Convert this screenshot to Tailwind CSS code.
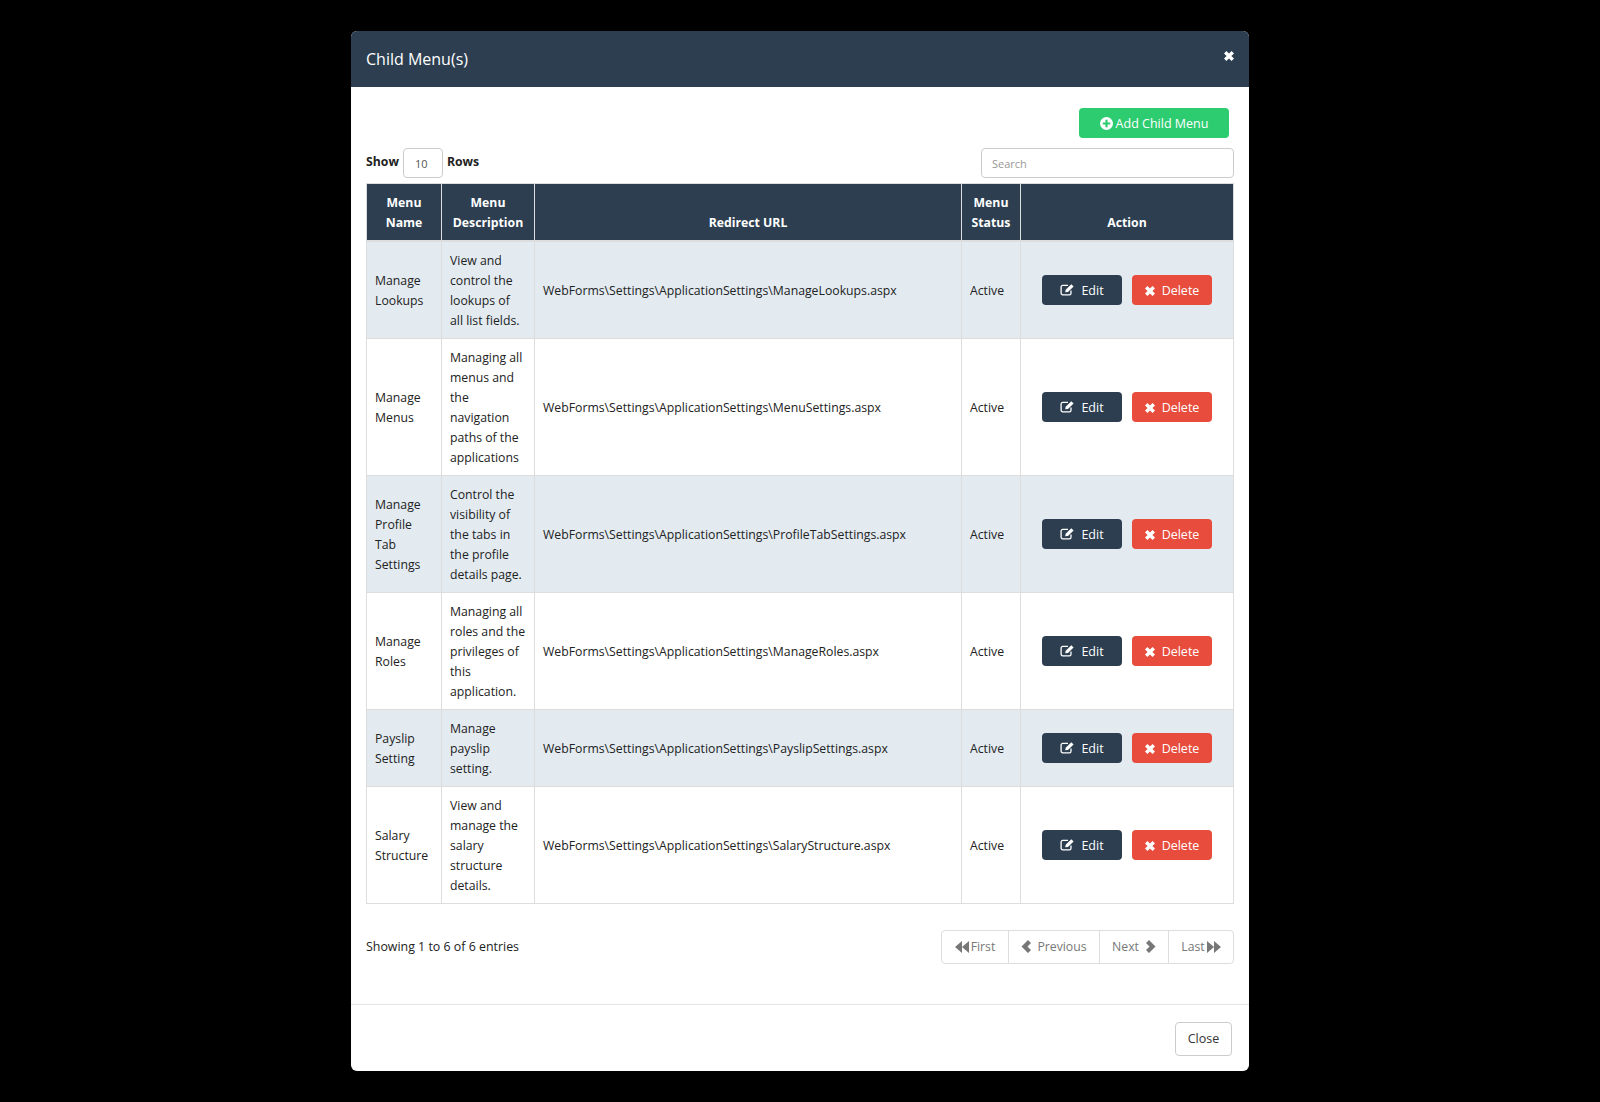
<!DOCTYPE html>
<html lang="en">
<head>
    <meta charset="UTF-8">
    <title>Child Menu(s)</title>
    <script src="https://cdn.jsdelivr.net/npm/@tailwindcss/browser@4"></script>
</head>
<body class="bg-black min-h-screen font-['Open_Sans',sans-serif] text-[12.25px] leading-5 text-[#222]">
    <!-- Modal -->
    <div class="w-[898px] h-[1040px] mt-[31px] ml-[351px] bg-white rounded-md overflow-hidden flex flex-col">
        <div class="h-14 shrink-0 bg-[#2c3e50] flex items-center justify-between pl-[15px] pr-[15px] text-white">
            <h4 class="text-[16px]">Child Menu(s)</h4>
            <svg class="w-[10px] h-[10px] mb-[6px]" viewBox="0 0 10 10" fill="#fff"><path d="M2.400 0 5 2.600 7.600 0 10 2.400 7.400 5 10 7.600 7.600 10 5 7.400 2.400 10 0 7.600 2.600 5 0 2.400z"/></svg>
        </div>

        <div class="flex-1 px-[15px] pt-[21px]">
            <div class="flex justify-end pr-[5px]">
                <button class="w-[150px] h-[30px] pt-px bg-[#2ecc71] text-white text-[12.5px] rounded flex items-center justify-center gap-[3px]">
                    <svg class="w-[13px] h-[13px]" viewBox="0 0 24 24"><circle cx="12" cy="12" r="12" fill="#fff"/><path d="M10 5h4v5h5v4h-5v5h-4v-5H5v-4h5z" fill="#2ecc71"/></svg>
                    Add Child Menu
                </button>
            </div>

            <div class="flex justify-between items-center mt-[10px] mb-[5px]">
                <div class="flex items-center font-bold text-[#222]">
                    <span class="mb-[3px]">Show</span>
                    <input value="10" class="w-[40px] h-[30px] mx-[4px] pl-[11px] border border-[#ccc] rounded text-[11px] font-normal text-[#555]">
                    <span class="mb-[3px]">Rows</span>
                </div>
                <input placeholder="Search" class="w-[253px] h-[30px] border border-[#ccc] rounded px-[10px] text-[11px] placeholder:text-[#999]">
            </div>

            <!-- Table -->
            <table class="w-[868px] table-fixed border-collapse">
                <colgroup>
                    <col class="w-[75px]">
                    <col class="w-[93px]">
                    <col class="w-[427px]">
                    <col class="w-[59px]">
                    <col>
                </colgroup>
                <thead class="bg-[#2c3e50] text-white font-bold">
                    <tr class="h-[57px]">
                        <th class="border border-[#ddd] border-b-2 align-bottom px-2 pb-[7px]">Menu<br>Name</th>
                        <th class="border border-[#ddd] border-b-2 align-bottom px-1 pb-[7px]">Menu<br>Description</th>
                        <th class="border border-[#ddd] border-b-2 align-bottom px-2 pb-[7px]">Redirect URL</th>
                        <th class="border border-[#ddd] border-b-2 align-bottom px-1 pb-[7px]">Menu<br>Status</th>
                        <th class="border border-[#ddd] border-b-2 align-bottom px-2 pb-[7px]">Action</th>
                    </tr>
                </thead>
                <tbody>
                    <tr class="bg-[#e3ebf1]">
                        <td class="border border-[#ddd] px-2 pt-[9px] pb-[7px]">Manage<br>Lookups</td>
                        <td class="border border-[#ddd] px-2 pt-[9px] pb-[7px] whitespace-nowrap">View and<br>control the<br>lookups of<br>all list fields.</td>
                        <td class="border border-[#ddd] px-2 pt-[9px] pb-[7px]">WebForms\Settings\ApplicationSettings\ManageLookups.aspx</td>
                        <td class="border border-[#ddd] px-2 pt-[9px] pb-[7px]">Active</td>
                        <td class="border border-[#ddd] p-2">
                            <div class="flex justify-center gap-[10px] text-[12.5px]">
                                <button class="w-20 h-[30px] pt-[3px] bg-[#2c3e50] text-white rounded flex items-center justify-center gap-[6px]"><svg class="w-[15px] h-[13px] mb-[3px]" viewBox="0 0 15 13" fill="none" stroke="#fff" stroke-width="1.3"><path d="M11 7.500v2.700a1.600 1.600 0 0 1-1.600 1.600H2.700a1.600 1.600 0 0 1-1.600-1.600V4a1.600 1.600 0 0 1 1.600-1.600H8"/><path d="M5.200 9.300 5.700 6.800 11.300 1.200 13.600 3.500 8 9z" fill="#fff" stroke="none"/></svg>Edit</button>
                                <button class="w-20 h-[30px] pt-[3px] bg-[#e74c3c] text-white rounded flex items-center justify-center gap-[7px]"><svg class="w-[10px] h-[10px] mb-px" viewBox="0 0 10 10" fill="#fff"><path d="M2.400 0 5 2.600 7.600 0 10 2.400 7.400 5 10 7.600 7.600 10 5 7.400 2.400 10 0 7.600 2.600 5 0 2.400z"/></svg>Delete</button>
                            </div>
                        </td>
                    </tr>
                    <tr class="bg-white">
                        <td class="border border-[#ddd] px-2 pt-[9px] pb-[7px]">Manage<br>Menus</td>
                        <td class="border border-[#ddd] px-2 pt-[9px] pb-[7px] whitespace-nowrap">Managing all<br>menus and<br>the<br>navigation<br>paths of the<br>applications</td>
                        <td class="border border-[#ddd] px-2 pt-[9px] pb-[7px]">WebForms\Settings\ApplicationSettings\MenuSettings.aspx</td>
                        <td class="border border-[#ddd] px-2 pt-[9px] pb-[7px]">Active</td>
                        <td class="border border-[#ddd] p-2">
                            <div class="flex justify-center gap-[10px] text-[12.5px]">
                                <button class="w-20 h-[30px] pt-[3px] bg-[#2c3e50] text-white rounded flex items-center justify-center gap-[6px]"><svg class="w-[15px] h-[13px] mb-[3px]" viewBox="0 0 15 13" fill="none" stroke="#fff" stroke-width="1.3"><path d="M11 7.500v2.700a1.600 1.600 0 0 1-1.600 1.600H2.700a1.600 1.600 0 0 1-1.600-1.600V4a1.600 1.600 0 0 1 1.600-1.600H8"/><path d="M5.200 9.300 5.700 6.800 11.300 1.200 13.600 3.500 8 9z" fill="#fff" stroke="none"/></svg>Edit</button>
                                <button class="w-20 h-[30px] pt-[3px] bg-[#e74c3c] text-white rounded flex items-center justify-center gap-[7px]"><svg class="w-[10px] h-[10px] mb-px" viewBox="0 0 10 10" fill="#fff"><path d="M2.400 0 5 2.600 7.600 0 10 2.400 7.400 5 10 7.600 7.600 10 5 7.400 2.400 10 0 7.600 2.600 5 0 2.400z"/></svg>Delete</button>
                            </div>
                        </td>
                    </tr>
                    <tr class="bg-[#e3ebf1]">
                        <td class="border border-[#ddd] px-2 pt-[9px] pb-[7px]">Manage<br>Profile<br>Tab<br>Settings</td>
                        <td class="border border-[#ddd] px-2 pt-[9px] pb-[7px] whitespace-nowrap">Control the<br>visibility of<br>the tabs in<br>the profile<br>details page.</td>
                        <td class="border border-[#ddd] px-2 pt-[9px] pb-[7px]">WebForms\Settings\ApplicationSettings\ProfileTabSettings.aspx</td>
                        <td class="border border-[#ddd] px-2 pt-[9px] pb-[7px]">Active</td>
                        <td class="border border-[#ddd] p-2">
                            <div class="flex justify-center gap-[10px] text-[12.5px]">
                                <button class="w-20 h-[30px] pt-[3px] bg-[#2c3e50] text-white rounded flex items-center justify-center gap-[6px]"><svg class="w-[15px] h-[13px] mb-[3px]" viewBox="0 0 15 13" fill="none" stroke="#fff" stroke-width="1.3"><path d="M11 7.500v2.700a1.600 1.600 0 0 1-1.600 1.600H2.700a1.600 1.600 0 0 1-1.600-1.600V4a1.600 1.600 0 0 1 1.600-1.600H8"/><path d="M5.200 9.300 5.700 6.800 11.300 1.200 13.600 3.500 8 9z" fill="#fff" stroke="none"/></svg>Edit</button>
                                <button class="w-20 h-[30px] pt-[3px] bg-[#e74c3c] text-white rounded flex items-center justify-center gap-[7px]"><svg class="w-[10px] h-[10px] mb-px" viewBox="0 0 10 10" fill="#fff"><path d="M2.400 0 5 2.600 7.600 0 10 2.400 7.400 5 10 7.600 7.600 10 5 7.400 2.400 10 0 7.600 2.600 5 0 2.400z"/></svg>Delete</button>
                            </div>
                        </td>
                    </tr>
                    <tr class="bg-white">
                        <td class="border border-[#ddd] px-2 pt-[9px] pb-[7px]">Manage<br>Roles</td>
                        <td class="border border-[#ddd] px-2 pt-[9px] pb-[7px] whitespace-nowrap">Managing all<br>roles and the<br>privileges of<br>this<br>application.</td>
                        <td class="border border-[#ddd] px-2 pt-[9px] pb-[7px]">WebForms\Settings\ApplicationSettings\ManageRoles.aspx</td>
                        <td class="border border-[#ddd] px-2 pt-[9px] pb-[7px]">Active</td>
                        <td class="border border-[#ddd] p-2">
                            <div class="flex justify-center gap-[10px] text-[12.5px]">
                                <button class="w-20 h-[30px] pt-[3px] bg-[#2c3e50] text-white rounded flex items-center justify-center gap-[6px]"><svg class="w-[15px] h-[13px] mb-[3px]" viewBox="0 0 15 13" fill="none" stroke="#fff" stroke-width="1.3"><path d="M11 7.500v2.700a1.600 1.600 0 0 1-1.600 1.600H2.700a1.600 1.600 0 0 1-1.600-1.600V4a1.600 1.600 0 0 1 1.600-1.600H8"/><path d="M5.200 9.300 5.700 6.800 11.300 1.200 13.600 3.500 8 9z" fill="#fff" stroke="none"/></svg>Edit</button>
                                <button class="w-20 h-[30px] pt-[3px] bg-[#e74c3c] text-white rounded flex items-center justify-center gap-[7px]"><svg class="w-[10px] h-[10px] mb-px" viewBox="0 0 10 10" fill="#fff"><path d="M2.400 0 5 2.600 7.600 0 10 2.400 7.400 5 10 7.600 7.600 10 5 7.400 2.400 10 0 7.600 2.600 5 0 2.400z"/></svg>Delete</button>
                            </div>
                        </td>
                    </tr>
                    <tr class="bg-[#e3ebf1]">
                        <td class="border border-[#ddd] px-2 pt-[9px] pb-[7px]">Payslip<br>Setting</td>
                        <td class="border border-[#ddd] px-2 pt-[9px] pb-[7px] whitespace-nowrap">Manage<br>payslip<br>setting.</td>
                        <td class="border border-[#ddd] px-2 pt-[9px] pb-[7px]">WebForms\Settings\ApplicationSettings\PayslipSettings.aspx</td>
                        <td class="border border-[#ddd] px-2 pt-[9px] pb-[7px]">Active</td>
                        <td class="border border-[#ddd] p-2">
                            <div class="flex justify-center gap-[10px] text-[12.5px]">
                                <button class="w-20 h-[30px] pt-[3px] bg-[#2c3e50] text-white rounded flex items-center justify-center gap-[6px]"><svg class="w-[15px] h-[13px] mb-[3px]" viewBox="0 0 15 13" fill="none" stroke="#fff" stroke-width="1.3"><path d="M11 7.500v2.700a1.600 1.600 0 0 1-1.600 1.600H2.700a1.600 1.600 0 0 1-1.600-1.600V4a1.600 1.600 0 0 1 1.600-1.600H8"/><path d="M5.200 9.300 5.700 6.800 11.300 1.200 13.600 3.500 8 9z" fill="#fff" stroke="none"/></svg>Edit</button>
                                <button class="w-20 h-[30px] pt-[3px] bg-[#e74c3c] text-white rounded flex items-center justify-center gap-[7px]"><svg class="w-[10px] h-[10px] mb-px" viewBox="0 0 10 10" fill="#fff"><path d="M2.400 0 5 2.600 7.600 0 10 2.400 7.400 5 10 7.600 7.600 10 5 7.400 2.400 10 0 7.600 2.600 5 0 2.400z"/></svg>Delete</button>
                            </div>
                        </td>
                    </tr>
                    <tr class="bg-white">
                        <td class="border border-[#ddd] px-2 pt-[9px] pb-[7px]">Salary<br>Structure</td>
                        <td class="border border-[#ddd] px-2 pt-[9px] pb-[7px] whitespace-nowrap">View and<br>manage the<br>salary<br>structure<br>details.</td>
                        <td class="border border-[#ddd] px-2 pt-[9px] pb-[7px]">WebForms\Settings\ApplicationSettings\SalaryStructure.aspx</td>
                        <td class="border border-[#ddd] px-2 pt-[9px] pb-[7px]">Active</td>
                        <td class="border border-[#ddd] p-2">
                            <div class="flex justify-center gap-[10px] text-[12.5px]">
                                <button class="w-20 h-[30px] pt-[3px] bg-[#2c3e50] text-white rounded flex items-center justify-center gap-[6px]"><svg class="w-[15px] h-[13px] mb-[3px]" viewBox="0 0 15 13" fill="none" stroke="#fff" stroke-width="1.3"><path d="M11 7.500v2.700a1.600 1.600 0 0 1-1.600 1.600H2.700a1.600 1.600 0 0 1-1.600-1.600V4a1.600 1.600 0 0 1 1.600-1.600H8"/><path d="M5.200 9.300 5.700 6.800 11.300 1.200 13.600 3.500 8 9z" fill="#fff" stroke="none"/></svg>Edit</button>
                                <button class="w-20 h-[30px] pt-[3px] bg-[#e74c3c] text-white rounded flex items-center justify-center gap-[7px]"><svg class="w-[10px] h-[10px] mb-px" viewBox="0 0 10 10" fill="#fff"><path d="M2.400 0 5 2.600 7.600 0 10 2.400 7.400 5 10 7.600 7.600 10 5 7.400 2.400 10 0 7.600 2.600 5 0 2.400z"/></svg>Delete</button>
                            </div>
                        </td>
                    </tr>
                </tbody>
            </table>

            <!-- Paging -->
            <div class="flex justify-between items-center mt-[26px] text-[12.4px]">
                <span>Showing 1 to 6 of 6 entries</span>
                <div class="flex h-[34px] border border-[#ddd] rounded text-[#777] text-[12.25px] divide-x divide-[#ddd]">
                    <a class="w-[67px] flex items-center justify-center gap-[2px]"><svg class="w-[14px] h-[12px]" viewBox="0 0 14 12" fill="#777"><path d="M7 0v12L0 6zM14 0v12L7 6z"/></svg>First</a>
                    <a class="w-[91px] flex items-center justify-center gap-[5px]"><svg class="w-[11px] h-[13px]" viewBox="0 0 11 13" fill="#777"><path d="M7 0 10 3 6.500 6.500 10 10 7 13 .5 6.500z"/></svg>Previous</a>
                    <a class="w-[69px] flex items-center justify-center gap-[6px]">Next<svg class="w-[11px] h-[13px]" viewBox="0 0 11 13" fill="#777"><path d="M4 0 1 3 4.500 6.500 1 10 4 13 10.500 6.500z"/></svg></a>
                    <a class="w-[64px] flex items-center justify-center gap-[2px]">Last<svg class="w-[14px] h-[12px]" viewBox="0 0 14 12" fill="#777"><path d="M0 0v12L7 6zM7 0v12L14 6z"/></svg></a>
                </div>
            </div>
        </div>

        <!-- Footer -->
        <div class="h-[67px] shrink-0 border-t border-[#e5e5e5] flex items-center justify-end pr-[17px]">
            <button class="w-[57px] h-[34px] pt-px mt-px border border-[#ccc] rounded text-[#333] text-[12.5px]">Close</button>
        </div>
    </div>
</body>
</html>
